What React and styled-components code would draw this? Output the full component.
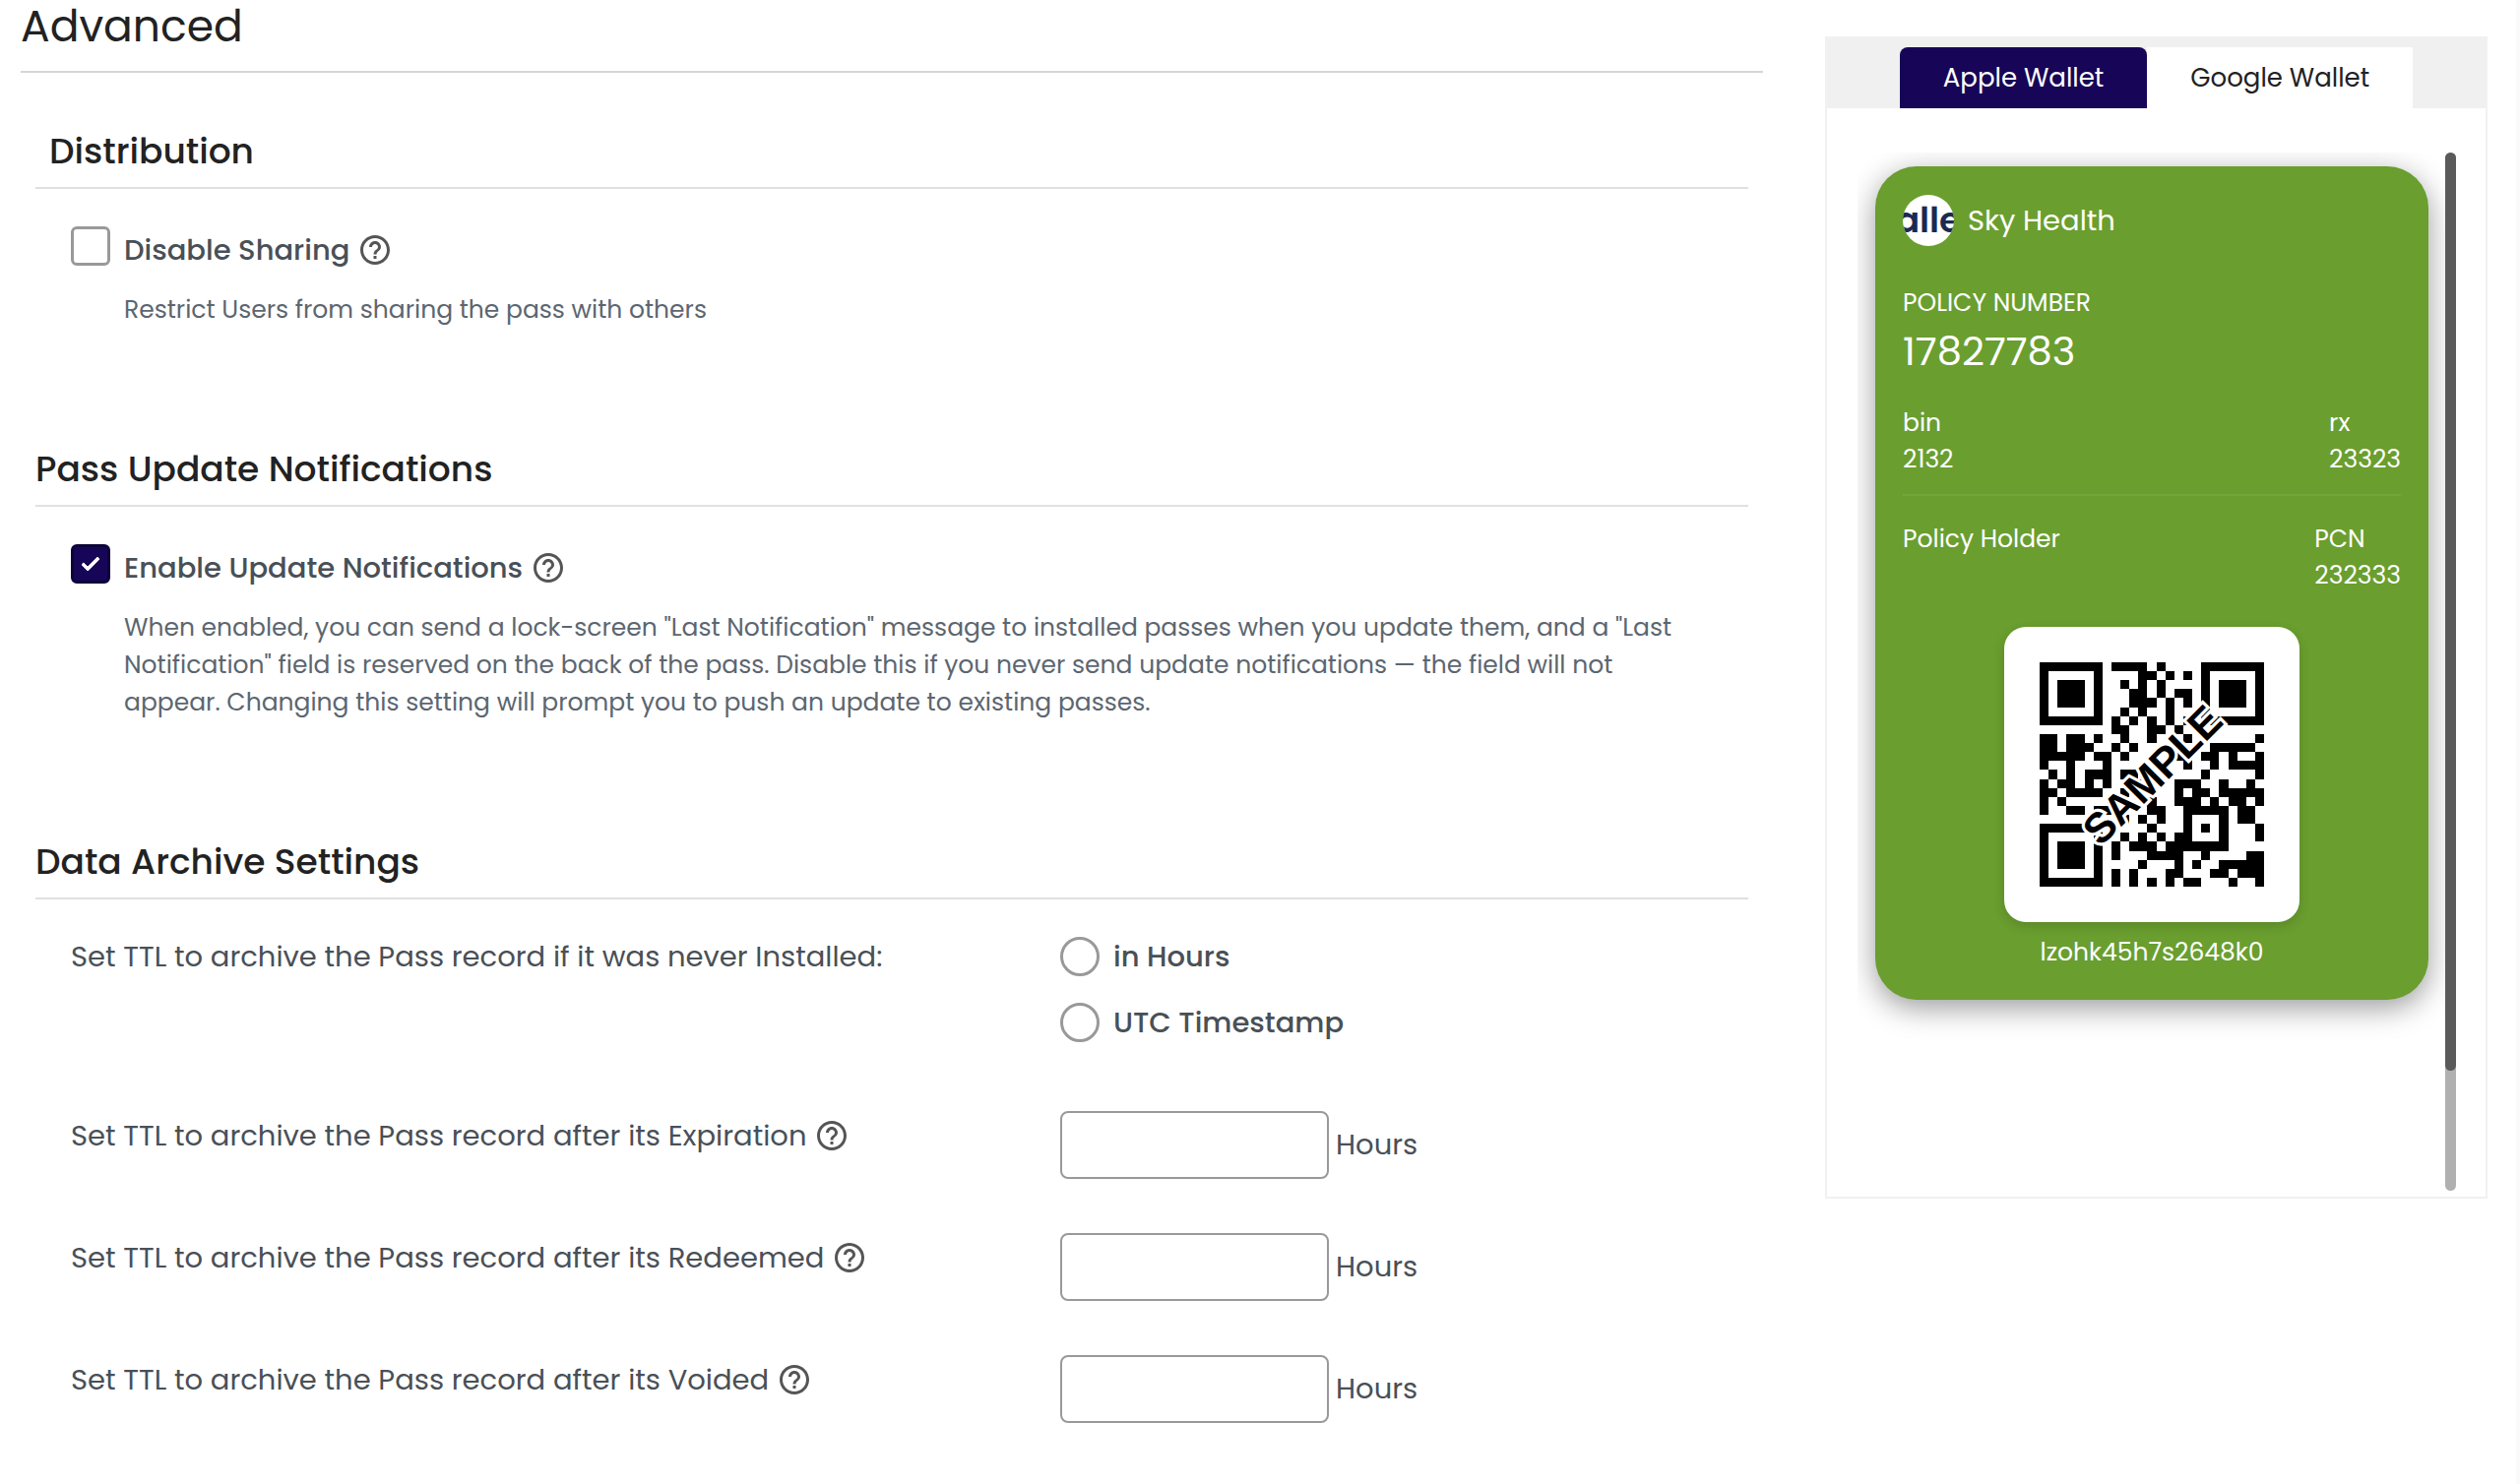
import { useState } from 'react';
import styled, { createGlobalStyle } from 'styled-components';
import { MdHelpOutline } from 'react-icons/md';

const QR_ROWS = [
  '1111111011110100001111111',
  '1000001000011010101000001',
  '1011101001010100001011101',
  '1011101000110101101011101',
  '1011101000111010101011101',
  '1000001001010010001000001',
  '1111111010101010101111111',
  '0000000011001101000000000',
  '1101101001001000100000001',
  '1101110010100010000111110',
  '1111101101000001101101001',
  '1001000100000000100101111',
  '0101011101100000001000001',
  '1011010100110001110010010',
  '1101111001000001011011111',
  '1010000010011001110101101',
  '1001101100001100111110110',
  '0000000001010100100010110',
  '1111111000001000101010001',
  '1000001001010101100010001',
  '1011101010111011111110000',
  '1011101010001111001000011',
  '1011101000010001010011111',
  '1000001010100011000110111',
  '1111111010101010110001001',
];

const TTL_FIELDS = [
  { id: 'expiration', label: 'Set TTL to archive the Pass record after its Expiration' },
  { id: 'redeemed', label: 'Set TTL to archive the Pass record after its Redeemed' },
  { id: 'voided', label: 'Set TTL to archive the Pass record after its Voided' },
];

function Help() {
  return (
    <HelpButton type="button" aria-label="Help">
      <MdHelpOutline />
    </HelpButton>
  );
}

function QrCode() {
  return (
    <QrSvg viewBox="0 0 250 250" role="img" aria-label="QR code">
      <g shapeRendering="crispEdges">
        {QR_ROWS.map((row, y) =>
          row.split('').map((cell, x) =>
            cell === '1' ? <rect key={`${x}-${y}`} x={x * 10} y={y * 10} width="10" height="10" /> : null
          )
        )}
      </g>
      <QrStamp x="125" y="142" textAnchor="middle" transform="rotate(-45 125 125)">SAMPLE</QrStamp>
    </QrSvg>
  );
}

function WalletPreview() {
  const [tab, setTab] = useState('apple');

  return (
    <Preview>
      <Tabs role="tablist">
        <Tab type="button" role="tab" aria-selected={tab === 'apple'} onClick={() => setTab('apple')}>Apple Wallet</Tab>
        <Tab type="button" role="tab" aria-selected={tab === 'google'} onClick={() => setTab('google')}>Google Wallet</Tab>
      </Tabs>
      <PreviewBody>
        <Viewport>
          <Pass>
            <PassHeader>
              <Logo>alle</Logo>
              <PassName>Sky Health</PassName>
            </PassHeader>
            <PassText>POLICY NUMBER</PassText>
            <PolicyNumber>17827783</PolicyNumber>
            <PassRow $divider>
              <div>
                <PassText>bin</PassText>
                <PassText>2132</PassText>
              </div>
              <div>
                <PassText>rx</PassText>
                <PassText>23323</PassText>
              </div>
            </PassRow>
            <PassRow>
              <div>
                <PassText>Policy Holder</PassText>
              </div>
              <div>
                <PassText>PCN</PassText>
                <PassText>232333</PassText>
              </div>
            </PassRow>
            <QrCard>
              <QrCode />
            </QrCard>
            <PassCode>lzohk45h7s2648k0</PassCode>
          </Pass>
        </Viewport>
        <ScrollTrack>
          <ScrollThumb />
        </ScrollTrack>
      </PreviewBody>
    </Preview>
  );
}

export default function App() {
  const [disableSharing, setDisableSharing] = useState(false);
  const [notify, setNotify] = useState(true);
  const [ttlType, setTtlType] = useState('');
  const [hours, setHours] = useState({ expiration: '', redeemed: '', voided: '' });

  return (
    <>
      <GlobalStyle />
      <Page>
        <main>
          <Title>Advanced</Title>

          <Section>
            <SectionTitle $inset>Distribution</SectionTitle>
            <Option>
              <Checkbox id="sharing" checked={disableSharing} onChange={(e) => setDisableSharing(e.target.checked)} />
              <div>
                <OptionHead>
                  <label htmlFor="sharing">Disable Sharing</label>
                  <Help />
                </OptionHead>
                <Description>Restrict Users from sharing the pass with others</Description>
              </div>
            </Option>
          </Section>

          <Section>
            <SectionTitle>Pass Update Notifications</SectionTitle>
            <Option>
              <Checkbox id="notify" checked={notify} onChange={(e) => setNotify(e.target.checked)} />
              <div>
                <OptionHead>
                  <label htmlFor="notify">Enable Update Notifications</label>
                  <Help />
                </OptionHead>
                <Description>
                  When enabled, you can send a lock-screen "Last Notification" message to installed passes when you update them, and a "Last
                  Notification" field is reserved on the back of the pass. Disable this if you never send update notifications — the field will not
                  appear. Changing this setting will prompt you to push an update to existing passes.
                </Description>
              </div>
            </Option>
          </Section>

          <Section>
            <SectionTitle>Data Archive Settings</SectionTitle>
            <Settings>
              <RadioSetting role="radiogroup" aria-labelledby="never-installed">
                <RadioCaption id="never-installed">Set TTL to archive the Pass record if it was never Installed:</RadioCaption>
                <RadioList>
                  <RadioLabel>
                    <Radio name="ttl" checked={ttlType === 'hours'} onChange={() => setTtlType('hours')} />
                    in Hours
                  </RadioLabel>
                  <RadioLabel>
                    <Radio name="ttl" checked={ttlType === 'utc'} onChange={() => setTtlType('utc')} />
                    UTC Timestamp
                  </RadioLabel>
                </RadioList>
              </RadioSetting>
              {TTL_FIELDS.map((field) => (
                <Setting key={field.id}>
                  <Caption>
                    <label htmlFor={field.id}>{field.label}</label>
                    <Help />
                  </Caption>
                  <HoursField>
                    <HoursInput
                      id={field.id}
                      value={hours[field.id]}
                      onChange={(e) => setHours({ ...hours, [field.id]: e.target.value })}
                    />
                    <span>Hours</span>
                  </HoursField>
                </Setting>
              ))}
            </Settings>
          </Section>
        </main>
        <WalletPreview />
      </Page>
    </>
  );
}

const GlobalStyle = createGlobalStyle`
  *, *::before {
    box-sizing: border-box;
  }

  body {
    margin: 0;
    background: #fff;
    color: #495057;
    font-family: Poppins, Inter, sans-serif;
    /* single-storey a */
    font-feature-settings: 'cv11';
  }

  h1, h2, p {
    margin: 0;
  }

  button, input {
    font: inherit;
    font-feature-settings: inherit;
    margin: 0;
  }
`;

const Page = styled.div`
  display: grid;
  grid-template-columns: 1770fr 673fr;
  column-gap: 63px;
  align-items: start;
  min-height: 100vh;
  padding: 0 29px 0 21px;
  border-right: 4px solid #fafafa;
`;

const Title = styled.h1`
  padding-bottom: 18px;
  border-bottom: 2px solid #d6d6d6;
  color: #222;
  font-weight: 400;
  font-size: 44px;
  line-height: 54px;
`;

const Section = styled.section`
  margin: 118px 15px 0;

  &:first-of-type {
    margin-top: 55px;
  }
`;

const SectionTitle = styled.h2`
  padding: 0 0 11px ${({ $inset }) => ($inset ? '14px' : '0')};
  border-bottom: 2px solid #e0e0e0;
  color: #222;
  font-weight: 500;
  font-size: 36px;
  line-height: 50px;
`;

const Option = styled.div`
  display: flex;
  align-items: flex-start;
  gap: 14px;
  padding: 38px 36px 0;
`;

const OptionHead = styled.div`
  display: flex;
  align-items: center;
  gap: 8px;
  font-weight: 500;
  font-size: 29px;
  line-height: 48px;
`;

const Description = styled.p`
  margin-top: 18px;
  color: #5c6670;
  font-size: 25px;
  line-height: 38px;
`;

const HelpButton = styled.button`
  display: flex;
  padding: 0;
  border: 0;
  background: none;
  color: #555;
  font-size: 36px;
  cursor: pointer;
`;

const Checkbox = styled.input.attrs({ type: 'checkbox' })`
  flex: none;
  display: grid;
  place-items: center;
  width: 40px;
  height: 40px;
  border: 3px solid #999;
  border-radius: 6px;
  background: #fff;
  appearance: none;

  &:checked {
    border-color: #0d0338;
    background: #170657;
  }

  &:checked::before {
    content: '';
    width: 18px;
    height: 10px;
    margin-bottom: 4px;
    border-bottom: 4px solid #fff;
    border-left: 4px solid #fff;
    border-radius: 2px;
    transform: rotate(-45deg);
  }
`;

const Settings = styled.div`
  display: grid;
  row-gap: 55px;
  padding: 38px 0 0 36px;
`;

const Setting = styled.div`
  display: grid;
  grid-template-columns: 1005fr 699fr;
  align-items: start;
  font-size: 29px;
`;

const RadioSetting = styled(Setting)`
  margin-bottom: 15px;
`;

const Caption = styled.div`
  display: flex;
  align-items: center;
  gap: 8px;
  line-height: 50px;
`;

const RadioCaption = styled.div`
  line-height: 40px;
`;

const RadioList = styled.div`
  display: grid;
  justify-items: start;
  row-gap: 27px;
`;

const RadioLabel = styled.label`
  display: flex;
  align-items: center;
  gap: 14px;
  font-weight: 500;
  line-height: 40px;
`;

const Radio = styled.input.attrs({ type: 'radio' })`
  width: 40px;
  height: 40px;
  border: 3px solid #999;
  border-radius: 50%;
  background: #fff;
  appearance: none;

  &:checked {
    border: 12px solid #170657;
  }
`;

const HoursField = styled.div`
  display: flex;
  align-items: center;
  gap: 7px;
`;

const HoursInput = styled.input.attrs({ type: 'text' })`
  width: 273px;
  height: 69px;
  padding: 0 16px;
  border: 2px solid #999;
  border-radius: 8px;
  background: #fff;
  color: #495057;
`;

const Preview = styled.aside`
  margin-top: 37px;
  border: 2px solid #f1f1f1;
`;

const Tabs = styled.div`
  display: flex;
  justify-content: center;
  padding-top: 9px;
  background: #f0f0f0;
`;

const Tab = styled.button`
  height: 62px;
  padding: 0 44px;
  border: 0;
  background: #fff;
  color: #222;
  font-size: 26px;
  cursor: pointer;

  &[aria-selected='true'] {
    border-radius: 8px 8px 0 0;
    background: #170657;
    color: #fff;
  }
`;

const PreviewBody = styled.div`
  display: flex;
  padding: 45px 30px 6px 31px;
`;

const Viewport = styled.div`
  flex: 1;
  padding: 14px 17px 194px 18px;
  overflow: hidden;
`;

const ScrollTrack = styled.div`
  width: 11px;
  padding-bottom: 122px;
  border-radius: 6px;
  background: #b0b0b0;
`;

const ScrollThumb = styled.div`
  height: 100%;
  border-radius: 6px;
  background: #5a5a5a;
`;

const Pass = styled.article`
  padding: 29px 28px 30px;
  border-radius: 42px;
  background: #6a9e2f;
  box-shadow: 0 8px 30px rgba(0, 0, 0, 0.4);
  color: #fff;
`;

const PassHeader = styled.header`
  display: flex;
  align-items: center;
  gap: 14px;
  margin-bottom: 39px;
`;

const Logo = styled.div`
  display: flex;
  align-items: center;
  justify-content: center;
  width: 52px;
  height: 52px;
  border-radius: 50%;
  background: #fff;
  color: #1b2a52;
  font-weight: 600;
  font-size: 36px;
  line-height: 52px;
  overflow: hidden;
`;

const PassName = styled.div`
  font-size: 29px;
`;

const PassText = styled.div`
  font-size: 25px;
  line-height: 37px;
`;

const PolicyNumber = styled.div`
  margin-bottom: 23px;
  font-size: 40px;
  line-height: 62px;
`;

const PassRow = styled.div`
  display: flex;
  justify-content: space-between;
  padding-bottom: ${({ $divider }) => ($divider ? '17px' : '34px')};

  ${({ $divider }) => $divider && `
    margin-bottom: 25px;
    border-bottom: 2px solid #74a53c;
  `}
`;

const QrCard = styled.div`
  width: 300px;
  margin: 0 auto 12px;
  padding: 36px;
  border-radius: 22px;
  background: #fff;
  box-shadow: 0 4px 12px rgba(0, 0, 0, 0.15);
`;

const QrSvg = styled.svg`
  display: block;
  width: 100%;
`;

const QrStamp = styled.text`
  fill: #000;
  stroke: #fff;
  stroke-width: 7px;
  paint-order: stroke;
  font-family: 'Liberation Sans', sans-serif;
  font-weight: 700;
  font-size: 47px;
`;

const PassCode = styled(PassText)`
  text-align: center;
`;
